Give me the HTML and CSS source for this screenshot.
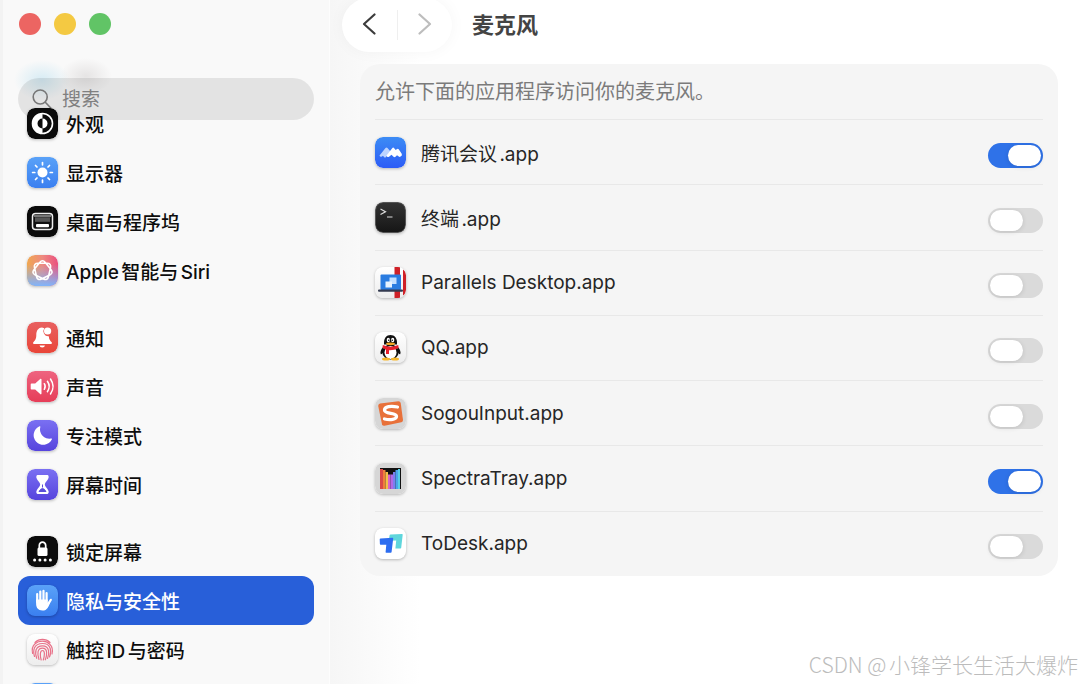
FILE: index.html
```
<!DOCTYPE html>
<html lang="zh-CN">
<head>
  <meta charset="UTF-8">
  <meta name="viewport" content="width=device-width, initial-scale=1.0">
  <title>麦克风</title>
  <link rel="stylesheet" href="styles.css">
</head>
<body>
  <div class="window">
    <aside class="sidebar">
      <div class="lights">
        <button class="light red" aria-label="关闭"></button>
        <button class="light yellow" aria-label="最小化"></button>
        <button class="light green" aria-label="缩放"></button>
      </div>

      <div class="search">
        <svg class="search-icon" viewBox="0 0 20 20" fill="none" stroke="#777" stroke-width="1.6" stroke-linecap="round"><circle cx="8.2" cy="8" r="7"/><path d="M13.3 13.2L18.8 19"/></svg>
        <input type="text" placeholder="搜索" aria-label="搜索">
      </div>

      <nav class="menu">
        <div class="group">
          <a class="item" href="#">
            <svg class="icon" viewBox="0 0 31 31"><rect width="31" height="31" rx="8" fill="#0b0b0b"/><circle cx="15.5" cy="15.5" r="10" fill="#0b0b0b" stroke="#fff" stroke-width="1.6"/><path d="M15.5 5.5a10 10 0 0 0 0 20v-5a5 5 0 0 1 0-10z" fill="#fff"/><path d="M15.5 10.5a5 5 0 0 1 0 10z" fill="#fff"/></svg>
            外观
          </a>
          <a class="item" href="#">
            <svg class="icon" viewBox="0 0 31 31"><rect width="31" height="31" rx="8" fill="url(#blue)"/><circle cx="15.5" cy="15.5" r="5" fill="#fff"/><g stroke="#fff" stroke-width="1.7" stroke-linecap="round"><path d="M15.5 5.6v2.2M15.5 23.2v2.2M5.6 15.5h2.2M23.2 15.5h2.2M8.5 8.5l1.5 1.5M21 21l1.5 1.5M22.5 8.5L21 10M8.5 22.5L10 21"/></g></svg>
            显示器
          </a>
          <a class="item" href="#">
            <svg class="icon" viewBox="0 0 31 31"><rect width="31" height="31" rx="8" fill="#0b0b0b"/><rect x="5.5" y="7.5" width="20" height="16" rx="3" fill="#111" stroke="#eee" stroke-width="1.5"/><path d="M7 10h17" stroke="#999" stroke-width="1.4"/><rect x="8" y="11.3" width="15" height="4.5" fill="#555"/><rect x="9" y="18" width="13" height="3.2" rx="1" fill="#fff"/></svg>
            桌面与程序坞
          </a>
          <a class="item" href="#">
            <svg class="icon" viewBox="0 0 31 31"><rect width="31" height="31" rx="8" fill="url(#siri)"/><rect width="31" height="31" rx="8" fill="url(#siri-low)"/><path d="M18.300 7.500L23.900 14.600Q26.700 18.100 22.700 20L14.500 24Q10.500 25.900 9.500 21.500L7.500 12.700Q6.500 8.300 11 8.300L20 8.300Q24.500 8.300 23.500 12.700L21.500 21.500Q20.500 25.900 16.500 24L8.300 20Q4.300 18.100 7.100 14.600L12.700 7.500Q15.500 4 18.300 7.500z" fill="none" stroke="#fff" stroke-width="1.600"/></svg>
            Apple智能与Siri
          </a>
        </div>

        <div class="group">
          <a class="item" href="#">
            <svg class="icon" viewBox="0 0 31 31"><rect width="31" height="31" rx="8" fill="url(#red)"/><path d="M15 5.500c-4.500.4-5.700 4-5.700 7.500 0 4.300-1.600 5.700-3 7.300-.6.900-.2 1.700.8 1.700h16.800c1 0 1.400-.8.800-1.700-1.300-1.500-2.700-2.800-2.900-6.100a5 5 0 0 1-4.500-7.900z" fill="#fff"/><circle cx="20.600" cy="9" r="3.600" fill="#fff"/><path d="M12.500 23.500h5.500a2.800 2.400 0 0 1-5.500 0z" fill="#fff"/></svg>
            通知
          </a>
          <a class="item" href="#">
            <svg class="icon" viewBox="0 0 31 31"><rect width="31" height="31" rx="8" fill="url(#pink)"/><path d="M4.500 12.600h3.700l5-4.500c.7-.6 1.300-.3 1.300.5v14c0 .8-.6 1.100-1.300.5l-5-4.500H4.500c-.6 0-.8-.3-.8-.8v-4.400c0-.5.200-.8.800-.8z" fill="#fff"/><g fill="none" stroke="#fff" stroke-width="1.500" stroke-linecap="round"><path d="M17.300 12.700q1.800 2.800 0 5.600"/><path d="M20.400 10.300q3.600 5.200 0 10.400"/><path d="M23.500 8q5.200 7.500 0 15"/></g></svg>
            声音
          </a>
          <a class="item" href="#">
            <svg class="icon" viewBox="0 0 31 31"><rect width="31" height="31" rx="8" fill="url(#indigo)"/><path d="M12.500 6.300a9.600 9.600 0 1 0 12.300 13.200c.4-.8-.2-1.100-.9-.9A9.300 9.300 0 0 1 13.300 7.200c.3-.8-.1-1.200-.8-.9z" fill="#fff"/></svg>
            专注模式
          </a>
          <a class="item" href="#">
            <svg class="icon" viewBox="0 0 31 31"><rect width="31" height="31" rx="8" fill="url(#indigo)"/><path d="M10.500 6h10c1 0 1.600 2 .9 3.200-.8 2.600-3.600 4-3.600 6.300s2.800 3.700 3.600 6.300c.7 1.200.1 3.200-.9 3.200h-10c-1 0-1.600-2-.9-3.200.8-2.600 3.600-4 3.600-6.300s-2.800-3.700-3.600-6.300C8.900 8 9.500 6 10.500 6z" fill="#fff"/><path d="M15.500 15.500v3M12 22.500q3.500-6 7 0z" stroke="#5a4fd8" fill="#5a4fd8"/><path d="M12 9.500h7l-3.500 4.200z" fill="#fff"/></svg>
            屏幕时间
          </a>
        </div>

        <div class="group">
          <a class="item" href="#">
            <svg class="icon" viewBox="0 0 31 31"><rect width="31" height="31" rx="8" fill="#0b0b0b"/><rect x="10.500" y="11.500" width="10" height="8.500" rx="1.500" fill="#fff"/><path d="M12.300 12V9.500a3.200 3.400 0 0 1 6.400 0V12" fill="none" stroke="#fff" stroke-width="1.700"/><g fill="#fff"><circle cx="7.600" cy="24" r="1.500"/><circle cx="12.900" cy="24" r="1.500"/><circle cx="18.100" cy="24" r="1.500"/><circle cx="23.400" cy="24" r="1.500"/></g></svg>
            锁定屏幕
          </a>
          <a class="item active" href="#">
            <svg class="icon" viewBox="0 0 31 31"><rect width="31" height="31" rx="8" fill="url(#blue)"/><g stroke="#fff" stroke-width="2.200" stroke-linecap="round" fill="none"><path d="M10.200 17V9M13.300 15V6.500M16.500 15V5.800M19.600 16V8"/><path d="M20.500 20l3.300-5.200"/></g><path d="M9.100 14.500h11.600v3l1.800-1.500.8 1.200c-1.600 4-3 8.400-7.800 8.400-4.500 0-6.400-3-6.400-7z" fill="#fff"/></svg>
            隐私与安全性
          </a>
          <a class="item" href="#">
            <svg class="icon" viewBox="0 0 31 31"><rect width="31" height="31" rx="8" fill="url(#paper)"/><g fill="none" stroke="#e8738a" stroke-width="1.200" stroke-linecap="round"><path d="M8 8.500a10.500 10.500 0 0 1 15 0"/><path d="M5.600 19.500C3.500 10 11 7.200 15.500 7.200s11.800 3.800 9.500 12.800"/><path d="M7.500 22.500c-1.800-6-.8-13 8-13s9.300 8 7 13.500"/><path d="M9.700 24.300c-2-6-1.500-12.500 5.800-12.500s7 8 5 12.700"/><path d="M12 25.500c-1.800-5-2-11.300 3.500-11.300s4.500 7 2.800 11.600"/><path d="M14.200 26c-1.200-4-1.500-9.500 1.300-9.500s2 5.500.8 9.500"/></g></svg>
            触控ID与密码
          </a>
          <a class="item" href="#" aria-label="用户与群组">
            <svg class="icon" viewBox="0 0 31 31"><rect width="31" height="31" rx="8" fill="url(#blue)"/></svg>
          </a>
        </div>
      </nav>
    </aside>

    <main class="content">
      <header class="toolbar">
        <div class="nav-buttons">
          <button aria-label="后退"><svg viewBox="0 0 14 24" fill="none" stroke="#3c3c3c" stroke-width="2.200" stroke-linecap="round" stroke-linejoin="round"><path d="M12.500 2.500L2 12l10.500 9.500"/></svg></button>
          <button aria-label="前进"><svg viewBox="0 0 14 24" fill="none" stroke="#bdbdbd" stroke-width="2.200" stroke-linecap="round" stroke-linejoin="round"><path d="M1.500 2.500L12 12 1.500 21.500"/></svg></button>
        </div>
        <h1>麦克风</h1>
      </header>

      <section class="panel">
        <p class="note">允许下面的应用程序访问你的麦克风。</p>
        <div class="apps">
          <label class="app">
            <svg class="icon" viewBox="0 0 31 31"><rect width="31" height="31" rx="8" fill="url(#meeting)"/><path d="M4.500 18.500l6-7.500q1-1.200 2 0l3 3.500-4.500 5.500q-1 1-2 0L8 18.800l-1 .8q-2 .8-2.500-1.100z" fill="#bcd4ff"/><path d="M11.500 18.500l5.700-7.300q1-1.200 2 0l1.500 1.800 1-.8q1-1 2 0l3 4.500q.8 1.800-.7 2.500l-1.500.8-2.500-1.800-1.500 1.600q-1 .9-2 0l-2-2-2.500 2q-2 .8-2.500-1.300z" fill="#fff"/></svg>
            <span>腾讯会议.app</span>
            <input type="checkbox" role="switch" checked>
          </label>
          <label class="app">
            <svg class="icon" viewBox="0 0 31 31"><rect width="31" height="31" rx="8" fill="#555"/><rect x="1" y="1" width="29" height="29" rx="7" fill="url(#term)"/><path d="M5.500 7l5 2.700-5 2.800M12 15h5.500" fill="none" stroke="#ddd" stroke-width="1.200"/></svg>
            <span>终端.app</span>
            <input type="checkbox" role="switch">
          </label>
          <label class="app">
            <svg class="icon" viewBox="0 0 31 31"><rect width="31" height="31" rx="8" fill="url(#paper)"/><path d="M19.500 0h5.500v31h-5.500zM28 2.500q3 2 3 6v14q0 4-3 6z" fill="#cf2027"/><rect x="5.500" y="7.500" width="20.500" height="15.500" rx="1" fill="#2a7ce0"/><path d="M14.500 10.500h7v6.500h-7z" fill="#c5e0ff"/><path d="M10.500 14.500h6.500v6h-6.500z" fill="#e7f3ff"/><rect x="3" y="22.500" width="25" height="2.200" rx="1" fill="#343b50"/></svg>
            <span>Parallels Desktop.app</span>
            <input type="checkbox" role="switch">
          </label>
          <label class="app">
            <svg class="icon" viewBox="0 0 31 31"><rect width="31" height="31" rx="8" fill="url(#paper)"/><path d="M8.500 14.500q-4 4.500-2.800 7.500.8.800 2.800-2zM22.500 14.500q4 4.500 2.800 7.500-.8.800-2.800-2z" fill="#111"/><ellipse cx="15.500" cy="20" rx="8.200" ry="7.500" fill="#111"/><ellipse cx="15.500" cy="20.500" rx="6" ry="6.500" fill="#fff"/><path d="M9 12.500C8.500 6 11.500 3 15.500 3s7 3 6.500 9.500z" fill="#111"/><ellipse cx="13.300" cy="8" rx="1.600" ry="2.200" fill="#fff"/><ellipse cx="17.700" cy="8" rx="1.600" ry="2.200" fill="#fff"/><circle cx="13.700" cy="8.300" r=".7"/><circle cx="17.300" cy="8.300" r=".7"/><ellipse cx="15.500" cy="11.800" rx="4.500" ry="1.400" fill="#f5a623"/><path d="M7.800 13q7.700 3.500 15.400 0l.5 3q-5 2.600-9.700 2.300V22h-3v-4.500l-3.500-1.500z" fill="#e8202c"/><ellipse cx="11" cy="27" rx="4" ry="1.500" fill="#f6b62a"/><ellipse cx="20" cy="27" rx="4" ry="1.500" fill="#f6b62a"/></svg>
            <span>QQ.app</span>
            <input type="checkbox" role="switch">
          </label>
          <label class="app">
            <svg class="icon" viewBox="0 0 31 31"><rect width="31" height="31" rx="8" fill="#d6d6d6"/><path d="M5 5.500L23.500 3.200q1.800 0 2.200 1.800l2.300 17q0 1.700-1.600 2.200L9.500 27.800q-2 .2-2.500-1.600L3.200 8q-.2-2 1.800-2.500z" fill="#e8713a"/><path d="M22.500 9C16 7.500 9.500 8.500 9.500 12c0 4.500 12 2.200 12 6.300 0 3.400-6.500 4-12 2.700" fill="none" stroke="#fff" stroke-width="3.300" stroke-linecap="round"/></svg>
            <span>SogouInput.app</span>
            <input type="checkbox" role="switch">
          </label>
          <label class="app">
            <svg class="icon" viewBox="0 0 31 31"><rect width="31" height="31" rx="8" fill="#d6d6d6"/><rect x="5" y="5" width="21" height="21" fill="#111"/><path d="M5 6h3v20H5z" fill="#d94a48"/><path d="M8 7h2.500v19H8z" fill="#ef7f3c"/><path d="M10.500 9H13v17h-2.500z" fill="#f3c04b"/><path d="M13 11.500h2.500V26H13z" fill="#d765c8"/><path d="M15.500 11.500H18V26h-2.500z" fill="#b168e6"/><path d="M18 9h2.500v17H18z" fill="#7b7fee"/><path d="M20.500 7H23v19h-2.500z" fill="#4aa3ea"/><path d="M23 6h2v20h-2z" fill="#55cfe6"/></svg>
            <span>SpectraTray.app</span>
            <input type="checkbox" role="switch" checked>
          </label>
          <label class="app">
            <svg class="icon" viewBox="0 0 31 31"><rect width="31" height="31" rx="8" fill="#fff"/><path d="M15.500 6.500l11.500-.6q.8 0 .7.800l-1.500 13q-.1.700-.8.700h-5l.8-7.900-6.700.2q-.7 0-.6-.7l.7-4.700q.1-.8.900-.8z" fill="#5fd6dc"/><path d="M5.500 10.500l12-.7q.8 0 .7.800l-1.600 13.500q-.1.700-.8.700h-4.600q-.7 0-.6-.7l.7-7.400-5.700.1q-.7 0-.7-.7l-.2-4.800q0-.8.800-.8z" fill="#2d6df0"/></svg>
            <span>ToDesk.app</span>
            <input type="checkbox" role="switch">
          </label>
        </div>
      </section>
    </main>

    <div class="watermark">CSDN @小锋学长生活大爆炸</div>
  </div>

  <!-- shared gradients -->
  <svg class="defs" aria-hidden="true">
    <defs>
      <linearGradient id="blue" x2="0" y2="1"><stop stop-color="#5aa2f8"/><stop offset="1" stop-color="#3a7ff0"/></linearGradient>
      <linearGradient id="red" x2="0" y2="1"><stop stop-color="#e86060"/><stop offset="1" stop-color="#e94538"/></linearGradient>
      <linearGradient id="pink" x2="0" y2="1"><stop stop-color="#ee6480"/><stop offset="1" stop-color="#e63d58"/></linearGradient>
      <linearGradient id="indigo" x2="0" y2="1"><stop stop-color="#7a70f2"/><stop offset="1" stop-color="#5644dd"/></linearGradient>
      <linearGradient id="paper" x2="0" y2="1"><stop stop-color="#fff"/><stop offset="1" stop-color="#ededed"/></linearGradient>
      <linearGradient id="meeting" x2="0" y2="1"><stop stop-color="#3c8cf5"/><stop offset="1" stop-color="#2d5cf6"/></linearGradient>
      <linearGradient id="term" x2="0" y2="1"><stop stop-color="#333"/><stop offset="1" stop-color="#161616"/></linearGradient>
      <linearGradient id="siri"><stop stop-color="#f0a850"/><stop offset=".5" stop-color="#ee8a80"/><stop offset="1" stop-color="#ea4f7e"/></linearGradient>
      <linearGradient id="siri-low" x2="0" y2="1"><stop offset=".3" stop-color="#80b4fa" stop-opacity="0"/><stop offset="1" stop-color="#80b4fa"/></linearGradient>
    </defs>
  </svg>
</body>
</html>
```

FILE: styles.css
```
* { box-sizing: border-box; }
body { margin: 0; font-family: Inter, "Noto Sans CJK SC", sans-serif; font-size: 19px; color: #262626; background: #fff; text-autospace: normal; }
button { border: 0; padding: 0; background: none; }
.window { position: relative; display: flex; height: 100vh; overflow: hidden; }
.defs { position: absolute; width: 0; height: 0; }

/* sidebar */
.sidebar {
  flex: 0 0 330px;
  min-width: 0;
  padding: 13px 15px 0 18px;
  border-right: 1px solid #fdfdfd;
  box-shadow: inset 3px 0 0 #f3f3f3;
  background:
    radial-gradient(ellipse 28px 20px at 42px 80px, rgba(150, 210, 235, .35), transparent),
    radial-gradient(ellipse 26px 18px at 86px 76px, rgba(120, 110, 110, .15), transparent),
    #f9f9f9;
}
.lights { display: flex; gap: 13px; padding-left: 1px; }
.light { width: 22px; height: 22px; border-radius: 50%; }
.red { background: #ec6562; }
.yellow { background: #f4c942; }
.green { background: #61c466; }
.search { display: flex; align-items: center; gap: 10px; height: 42px; margin-top: 43px; padding: 0 14px; border-radius: 21px; background: rgba(0, 0, 0, .085); }
.search-icon { flex: none; width: 20px; height: 20px; }
.search input { width: 100%; min-width: 0; border: 0; padding: 0; outline: 0; background: none; font: inherit; }
.search input::placeholder { color: #808080; opacity: 1; }

/* the list scrolls up under the search box */
.menu { position: relative; display: flex; flex-direction: column; gap: 18px; margin-top: -21px; }
.item { display: flex; align-items: center; gap: 8px; height: 49px; padding: 0 9px; border-radius: 12px; color: #0d0d0d; font-weight: 500; text-decoration: none; white-space: nowrap; }
.item.active { background: #285fd9; color: #fff; }
.icon { flex: none; width: 31px; height: 31px; border-radius: 8px; box-shadow: 0 1px 3px rgba(0, 0, 0, .25); }

/* content */
.content { flex: 1; min-width: 0; padding-right: 22px; background: linear-gradient(to right, #f6f6f6, #fff 90px); }
.toolbar { display: flex; align-items: center; gap: 20px; height: 50px; padding-left: 12px; }
.nav-buttons { display: flex; align-items: center; width: 110px; height: 54px; border-radius: 27px; background: #fff; box-shadow: 0 0 16px rgba(0, 0, 0, .04); }
.nav-buttons button { flex: 1; height: 30px; }
.nav-buttons button + button { border-left: 1px solid #efefef; }
.nav-buttons svg { width: 14px; height: 24px; }
h1 { margin: 0; font-size: 22px; line-height: 30px; font-weight: 700; color: #444; }
.panel { margin: 14px 0 0 30px; padding: 0 15px; border-radius: 20px; background: #f5f5f5; }
.note { margin: 0; height: 55px; font-size: 20px; line-height: 57px; color: #7b7b7b; }
.apps { display: grid; grid-auto-rows: 1fr; min-height: 457px; }
.app { display: flex; align-items: center; gap: 15px; border-top: 1px solid #e8e8e8; }
.app span { flex: 1; }
.app input { appearance: none; width: 55px; height: 25px; margin: 6px 0 0; border-radius: 13px; background: #dadada; }
.app input::before { content: ""; display: block; width: 33px; height: 21px; margin: 2px; border-radius: 11px; background: #fff; box-shadow: 0 1px 5px rgba(0, 0, 0, .12); }
.app input:checked { background: #2f72e8; }
.app input:checked::before { margin-left: 20px; }

.watermark { position: absolute; right: 2px; bottom: 5px; font-family: "Noto Sans CJK SC", sans-serif; font-size: 21px; line-height: 30px; font-weight: 300; color: #bcbcbc; }
```
